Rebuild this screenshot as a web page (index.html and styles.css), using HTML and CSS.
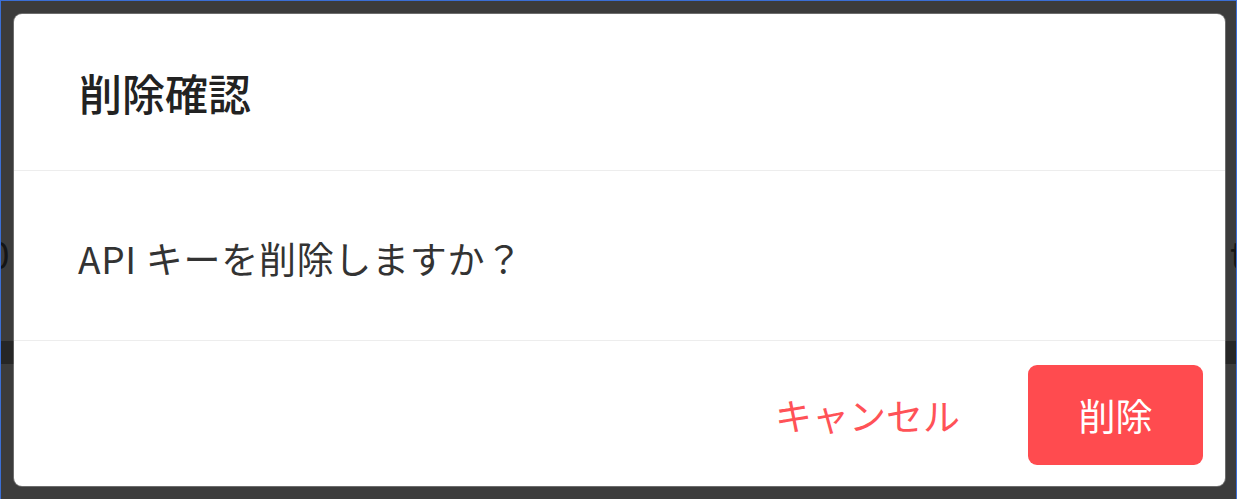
FILE: index.html
```html
<!DOCTYPE html>
<html lang="ja">
<head>
    <meta charset="UTF-8">
    <title>削除確認</title>
    <link rel="stylesheet" href="styles.css">
</head>
<body>
    <div class="page">
        <div class="page-row">
            <span class="page-cell left">0</span>
            <span class="page-cell right">t</span>
        </div>
        <div class="page-bar"></div>
    </div>

    <div class="overlay">
        <div class="dialog">
            <div class="dialog-header">
                <h2 class="dialog-title">削除確認</h2>
            </div>
            <div class="dialog-body">
                <p>API キーを削除しますか？</p>
            </div>
            <div class="dialog-footer">
                <button class="btn-cancel">キャンセル</button>
                <button class="btn-delete">削除</button>
            </div>
        </div>
    </div>
</body>
</html>
```

FILE: styles.css
```css
* {
    box-sizing: border-box;
}

html, body {
    margin: 0;
    height: 499px;
    overflow: hidden;
}

body {
    font-family: "Noto Sans CJK JP", "Noto Sans", sans-serif;
    background: #3c3c3c;
    border: 1px solid #3b6fd6;
    border-bottom: none;
    position: relative;
}

/* page behind the overlay */
.page {
    padding-top: 232px;
    color: #151515;
}

.page-row {
    display: flex;
    justify-content: space-between;
    font-size: 37px;
    line-height: 40px;
}

.page-cell.left {
    margin-left: -12px;
}

.page-cell.right {
    margin-right: -8px;
}

.page-bar {
    margin-top: 68px;
    height: 23px;
    background: #262626;
}

/* dialog */
.overlay {
    position: absolute;
    inset: 0;
    padding: 13px 11px 12px 13px;
}

.dialog {
    height: 472px;
    background: #fff;
    border-radius: 8px;
    box-shadow: 0 0 0 1px rgba(255,255,255,0.25);
    display: flex;
    flex-direction: column;
}

.dialog-header {
    height: 157px;
    display: flex;
    align-items: center;
    padding-left: 65px;
    border-bottom: 1px solid #ededed;
}

.dialog-title {
    margin: 0;
    font-size: 43px;
    font-weight: 500;
    color: #222;
}

.dialog-body {
    height: 170px;
    display: flex;
    align-items: center;
    padding: 4px 0 0 64px;
    border-bottom: 1px solid #ededed;
}

.dialog-body p {
    margin: 0;
    font-size: 37px;
    color: #333;
    letter-spacing: 0.7px;
}

.dialog-footer {
    flex: 1;
    display: flex;
    justify-content: flex-end;
    align-items: center;
    padding: 2px 22px 0 0;
    gap: 68px;
}

.dialog-footer button {
    font-family: inherit;
    font-size: 37px;
    border: none;
    cursor: pointer;
}

.btn-cancel {
    background: none;
    color: #ff5257;
    padding: 0;
}

.btn-delete {
    width: 175px;
    height: 100px;
    background: #ff4b4f;
    color: #fff;
    border-radius: 9px;
}
```
